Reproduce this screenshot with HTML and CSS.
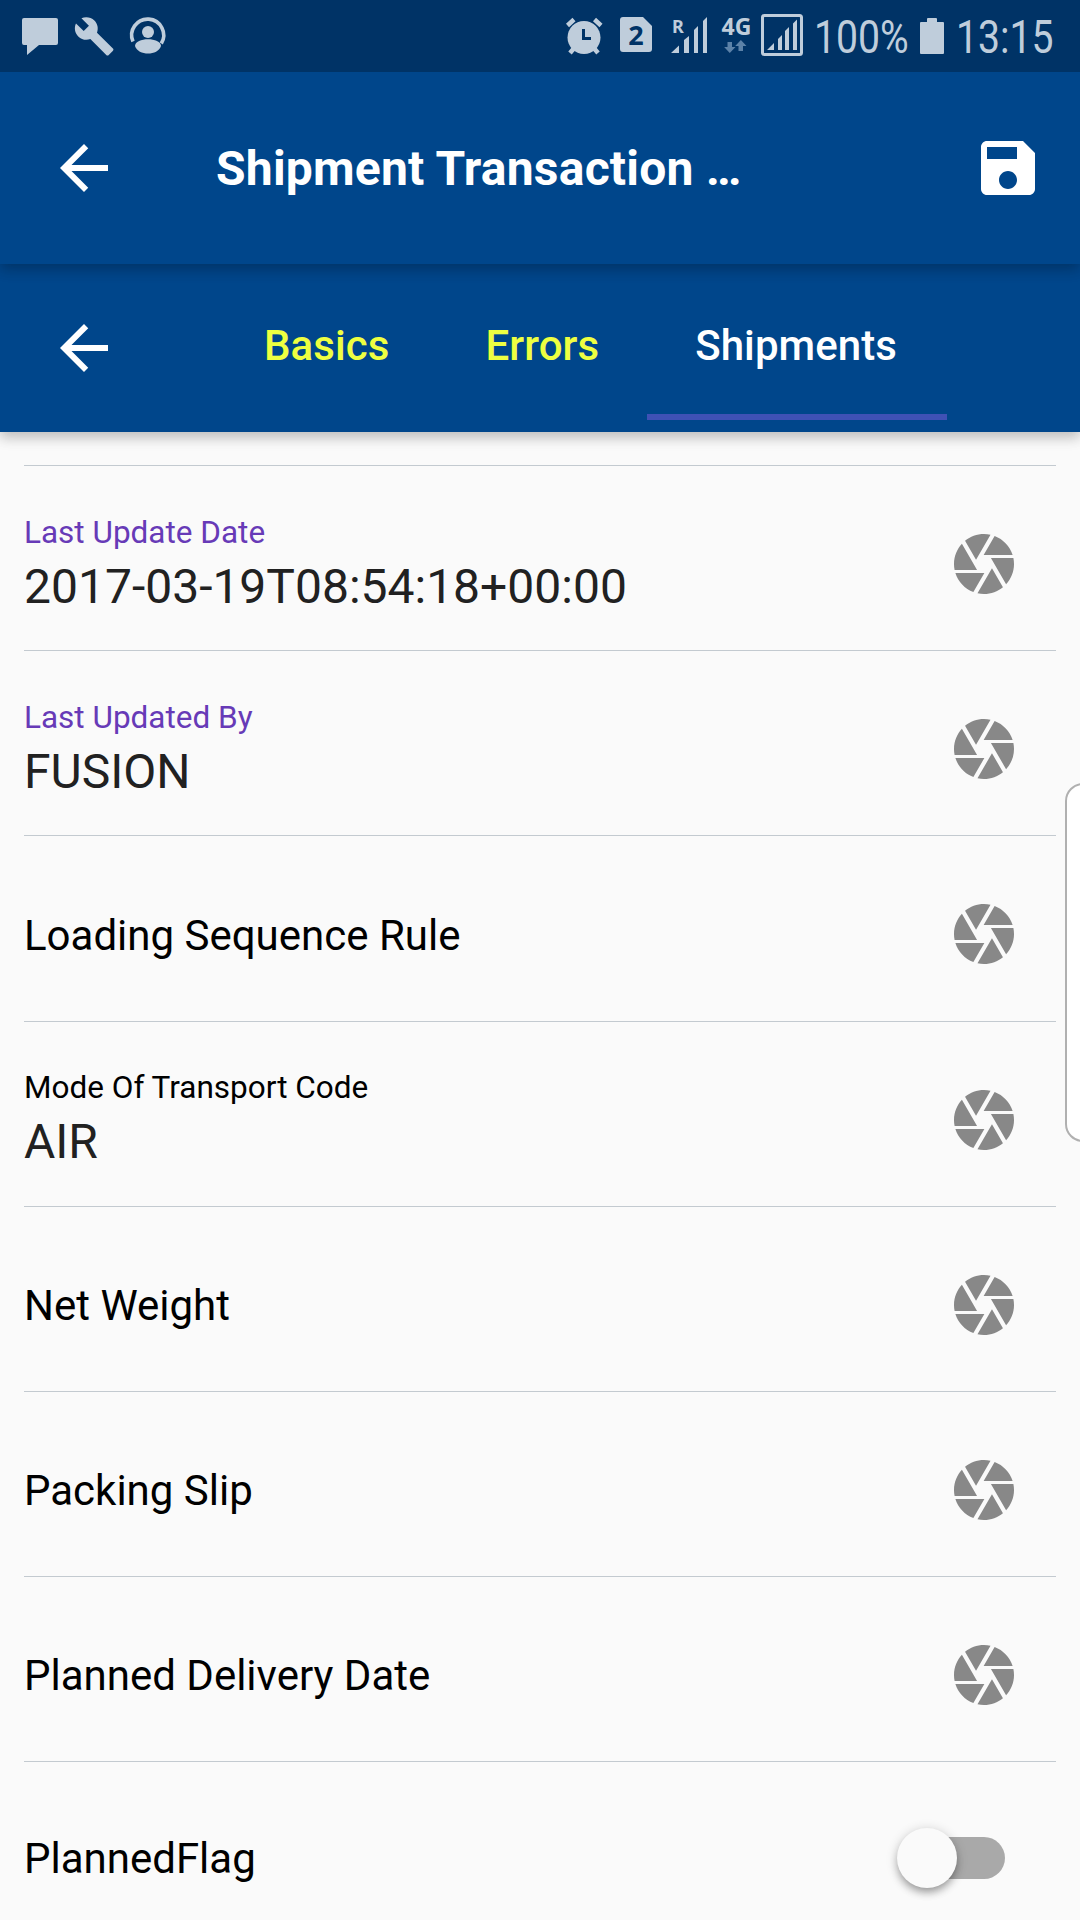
FILE: index.html
```html
<!DOCTYPE html>
<html lang="en">
<head>
<meta charset="utf-8">
<title>Shipment Transaction</title>
<link rel="stylesheet" href="styles.css">
</head>
<body>
<svg class="defs" width="0" height="0">
  <symbol id="arrow" viewBox="0 0 24 24"><path d="M20 11H7.83l5.59-5.59L12 4l-8 8 8 8 1.41-1.41L7.83 13H20v-2z"/></symbol>
  <symbol id="camera" viewBox="0 0 24 24"><path d="M9.4 10.5l4.77-8.26C13.47 2.09 12.75 2 12 2c-2.4 0-4.6.85-6.32 2.25l3.66 6.35.06-.1zM21.54 9c-.92-2.92-3.15-5.26-6-6.34L11.88 9h9.66zm.26 1h-7.49l.29.5 4.76 8.25C21 16.97 22 14.61 22 12c0-.69-.07-1.35-.2-2zM8.54 12l-3.9-6.75C3.01 7.03 2 9.39 2 12c0 .69.07 1.35.2 2h7.49l-1.15-2zm-6.08 3c.92 2.92 3.15 5.26 6 6.34L12.12 15H2.46zm11.27 0l-3.9 6.76c.7.15 1.42.24 2.17.24 2.4 0 4.6-.85 6.32-2.25l-3.66-6.35-.93 1.6z"/></symbol>
</svg>
<div class="screen">
  <div class="status">
    <svg class="status-left" width="180" height="72" viewBox="0 0 180 72">
      <path d="M24 18h32q2 0 2 2v23q0 2-2 2H39L27 55V45h-3q-2 0-2-2V20q0-2 2-2z"/>
      <path transform="translate(73.2 15.3) scale(1.75)" d="M22.7 19l-9.1-9.1c.9-2.3.4-5-1.500-6.900-2-2-5-2.400-7.400-1.300L9 6 6 9 1.600 4.700C.4 7.100.9 10.100 2.900 12.100c1.900 1.900 4.600 2.400 6.900 1.500l9.100 9.100c.4.4 1 .4 1.400 0l2.300-2.300c.5-.4.5-1.100.1-1.400z"/>
      <path class="ring" d="M133 41.500A16 16 0 1 1 161.300 43.500"/>
      <circle cx="148" cy="32" r="6"/>
      <path d="M135 46c0-9 26-9 26 0-3 10-23 10-26 0z"/>
    </svg>
    <div class="status-right">
      <svg width="265" height="72" viewBox="0 0 265 72">
        <circle cx="44" cy="37.500" r="16.500"/>
        <path class="thick" d="M27.500 25.500l6.500-6M61 25.500l-6.500-6M30 53l5-6M58 53l-5-6"/>
        <path class="cut" d="M43.500 29v9.500H51"/>
        <path d="M83 17h20l9 9v23q0 3-3 3H83q-3 0-3-3V20q0-3 3-3z"/>
        <text class="sim" x="96" y="45">2</text>
        <text class="roam" x="132" y="32.500">R</text>
        <path d="M131 53l8-7.500V53zM144 40l5-4v17h-5zM154 30l4-4v27h-4zM163 21l4-4v36h-4z"/>
        <text class="net" x="181.500" y="35">4G</text>
        <path class="dim" d="M187.500 42h4.500v5h3.500l-5.700 6-5.700-6h3.400zM198.500 51h4.500v-5h3.500l-5.600-6-5.700 6h3.300z"/>
        <rect class="frame" x="222.500" y="15.500" width="39" height="39" rx="2"/>
        <path d="M227 50l7-7v7zM238 39l4-4v15h-4zM245 31l4-4v23h-4zM253 23.500l4-4V50h-4z"/>
      </svg>
      <span class="percent">100%</span>
      <svg class="battery" width="24" height="36" viewBox="0 0 24 36"><path d="M7 1q0-1 1-1h8q1 0 1 1v3h6q1 0 1 1v30q0 1-1 1H1q-1 0-1-1V5q0-1 1-1h6z"/></svg>
      <span class="clock">13:15</span>
    </div>
  </div>
  <header class="appbar">
    <svg class="back"><use href="#arrow"/></svg>
    <h1 class="title">Shipment Transaction …</h1>
    <svg class="save" viewBox="0 0 24 24"><path d="M17 3H5c-1.110 0-2 .9-2 2v14c0 1.100.89 2 2 2h14c1.100 0 2-.9 2-2V7l-4-4zm-5 16c-1.660 0-3-1.340-3-3s1.340-3 3-3 3 1.340 3 3-1.340 3-3 3zm3-10H5V5h10v4z"/></svg>
  </header>
  <nav class="tabbar">
    <svg class="back"><use href="#arrow"/></svg>
    <div class="tabs">
      <a class="tab">Basics</a>
      <a class="tab">Errors</a>
      <a class="tab active">Shipments</a>
    </div>
  </nav>
  <main class="list">
    <div class="row"><div class="field"><span class="label accent">Last Update Date</span><span class="value">2017-03-19T08:54:18+00:00</span></div><svg class="cam"><use href="#camera"/></svg></div>
    <div class="row"><div class="field"><span class="label accent">Last Updated By</span><span class="value">FUSION</span></div><svg class="cam"><use href="#camera"/></svg></div>
    <div class="row"><span class="hint">Loading Sequence Rule</span><svg class="cam"><use href="#camera"/></svg></div>
    <div class="row"><div class="field"><span class="label">Mode Of Transport Code</span><span class="value">AIR</span></div><svg class="cam"><use href="#camera"/></svg></div>
    <div class="row"><span class="hint">Net Weight</span><svg class="cam"><use href="#camera"/></svg></div>
    <div class="row"><span class="hint">Packing Slip</span><svg class="cam"><use href="#camera"/></svg></div>
    <div class="row"><span class="hint">Planned Delivery Date</span><svg class="cam"><use href="#camera"/></svg></div>
    <div class="row"><span class="hint flag">PlannedFlag</span><div class="switch"><div class="thumb"></div></div></div>
  </main>
  <div class="edge-panel"></div>
</div>
</body>
</html>
```
FILE: styles.css
```css
* { box-sizing: border-box; }
body { margin: 0; font-family: Roboto, sans-serif; background: #fafafa; }
svg { display: block; flex: none; }
.defs { position: absolute; }
.screen { position: relative; width: 1080px; height: 1920px; overflow: hidden; display: flex; flex-direction: column; background: #fafafa; }

.status { flex: none; height: 72px; display: flex; justify-content: space-between; background: #003366; color: #bfcddb; fill: #bfcddb; position: relative; z-index: 3; }
.status-right { display: flex; align-items: center; width: 540px; white-space: nowrap; }
.ring { fill: none; stroke: #bfcddb; stroke-width: 3.600; }
.thick { fill: none; stroke: #bfcddb; stroke-width: 4.500; }
.cut { fill: none; stroke: #003366; stroke-width: 3; }
.frame { fill: none; stroke: #bfcddb; stroke-width: 3; }
.dim { fill: #5c82a8; }
.sim { font: 700 27px "Noto Sans", sans-serif; fill: #003366; text-anchor: middle; }
.roam { font: 700 18px "Noto Sans", sans-serif; }
.net { font: 700 23px "Noto Sans", sans-serif; }
.percent, .clock { font-size: 45.500px; line-height: 76px; height: 72px; transform-origin: 0 50%; transform: scaleX(.86); }
.percent { width: 94px; margin-left: 8.500px; }
.battery { margin-left: 12.500px; }
.clock { margin-left: 12px; }

.appbar, .tabbar { flex: none; display: flex; background: #00468b; color: #fff; fill: #fff; position: relative; box-shadow: 0 6px 12px rgba(0,0,0,.17), 0 3px 15px rgba(0,0,0,.11); }
.appbar { height: 192px; padding: 0 36px 0 48px; z-index: 2; align-items: center; }
.tabbar { height: 168px; padding-left: 48px; z-index: 1; }
.back { width: 72px; height: 72px; }
.title { margin: 2px 0 0 96px; font-size: 48px; line-height: 56px; font-weight: 700; letter-spacing: .22px; flex: 1; white-space: nowrap; }
.save { width: 72px; height: 72px; }
.tabbar .back { margin-top: 48px; }
.tabs { display: flex; margin: 12px 0; padding-left: 96px; }
.tab { padding: 45px 48px 0; font-size: 42px; line-height: 50px; font-weight: 500; letter-spacing: .08px; color: #eeff41; height: 144px; }
.tab.active { width: 300px; color: #fff; border-bottom: 6px solid #3f51b5; }

.list { padding: 33.150px 24px 0; }
.row { height: 185.140px; display: flex; align-items: center; justify-content: space-between; border-top: 1px solid #c3cad0; padding-right: 36px; }
.field { display: flex; flex-direction: column; padding-top: 12.600px; }
.label { font-size: 31.500px; line-height: 37px; color: #000; }
.accent { color: #673ab7; }
.value { font-size: 48px; line-height: 56px; margin-top: 7.800px; color: #212121; }
.hint { font-size: 42px; line-height: 50px; margin-top: 15px; color: #000; }
.hint.flag { margin-top: 10px; }
.cam { width: 72px; height: 72px; fill: #888; margin-top: 12px; }
.switch { width: 99px; height: 42px; margin: 8px 15px 0 0; border-radius: 21px; background: #a9a9a9; }
.thumb { width: 60px; height: 60px; margin: -9px 0 0 -9px; border-radius: 50%; background: #fafafa; box-shadow: 0 6px 8px -2px rgba(0,0,0,.3), 0 2px 12px rgba(0,0,0,.2); }
.edge-panel { position: absolute; left: 1065px; top: 783px; width: 40px; height: 359px; border: 2px solid #b0b0b0; border-radius: 18px; background: #fff; }
```
